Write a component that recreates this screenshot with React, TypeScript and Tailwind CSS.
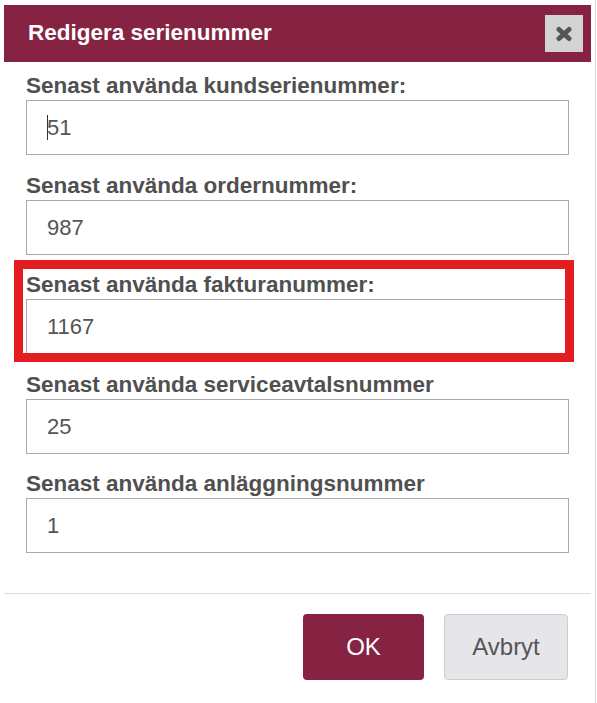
import React from "react";

const fields = [
  { label: "Senast använda kundserienummer:", value: "51", caret: true },
  { label: "Senast använda ordernummer:", value: "987" },
  { label: "Senast använda fakturanummer:", value: "1167" },
  { label: "Senast använda serviceavtalsnummer", value: "25" },
  { label: "Senast använda anläggningsnummer", value: "1" },
];

export default function App() {
  return (
    <div className="relative flex w-[597px] h-[703px] bg-white font-['Liberation_Sans',Arial,sans-serif] overflow-hidden">
      <div className="w-[595px] pt-[5px] pl-[4px]">
        <div className="w-[587px] flex flex-col">
          <div className="h-[57px] bg-[#862342] flex items-center justify-between pl-6 pr-2">
            <span className="text-white font-bold text-[22.5px] leading-none">Redigera serienummer</span>
            <div className="w-[38px] h-[37px] bg-[#d3d3d3] flex items-center justify-center">
              <svg width="18" height="16" viewBox="0 0 18 16">
                <path d="M4 3.5 L14 12.5 M14 3.5 L4 12.5" stroke="#555" strokeWidth="5" strokeLinecap="round" />
              </svg>
            </div>
          </div>
          <div className="px-[22px] pt-[12px] pb-[40px] flex flex-col gap-[18.5px]">
            {fields.map((f) => (
              <div key={f.label} className="flex flex-col">
                <div className="h-[24px] leading-[24px] text-[22.5px] font-bold text-[#505050] whitespace-nowrap">{f.label}</div>
                <div className="mt-[2px] h-[55px] border border-[#aaaaaa] bg-white flex items-center pl-5 text-[22px] text-[#555]">
                  {f.caret && <span className="inline-block w-px h-[25px] bg-[#333] -mr-px" />}
                  <span>{f.value}</span>
                </div>
              </div>
            ))}
          </div>
          <div className="h-px bg-[#dddddd]" />
          <div className="flex justify-end gap-5 pt-5 pr-[23px]">
            <div className="w-[121px] h-[66px] rounded-[4px] bg-[#862342] flex items-center justify-center text-white text-[24px]">OK</div>
            <div className="w-[124px] h-[66px] rounded-[4px] bg-[#e6e6ea] border border-[#cccccc] flex items-center justify-center text-[#555] text-[24px]">Avbryt</div>
          </div>
        </div>
      </div>
      <div className="w-px h-full bg-[#d6d6d6]" />
      <div className="absolute left-[14px] top-[260px] w-[560px] h-[102px] border-[9px] border-[#e41e20]" />
    </div>
  );
}
